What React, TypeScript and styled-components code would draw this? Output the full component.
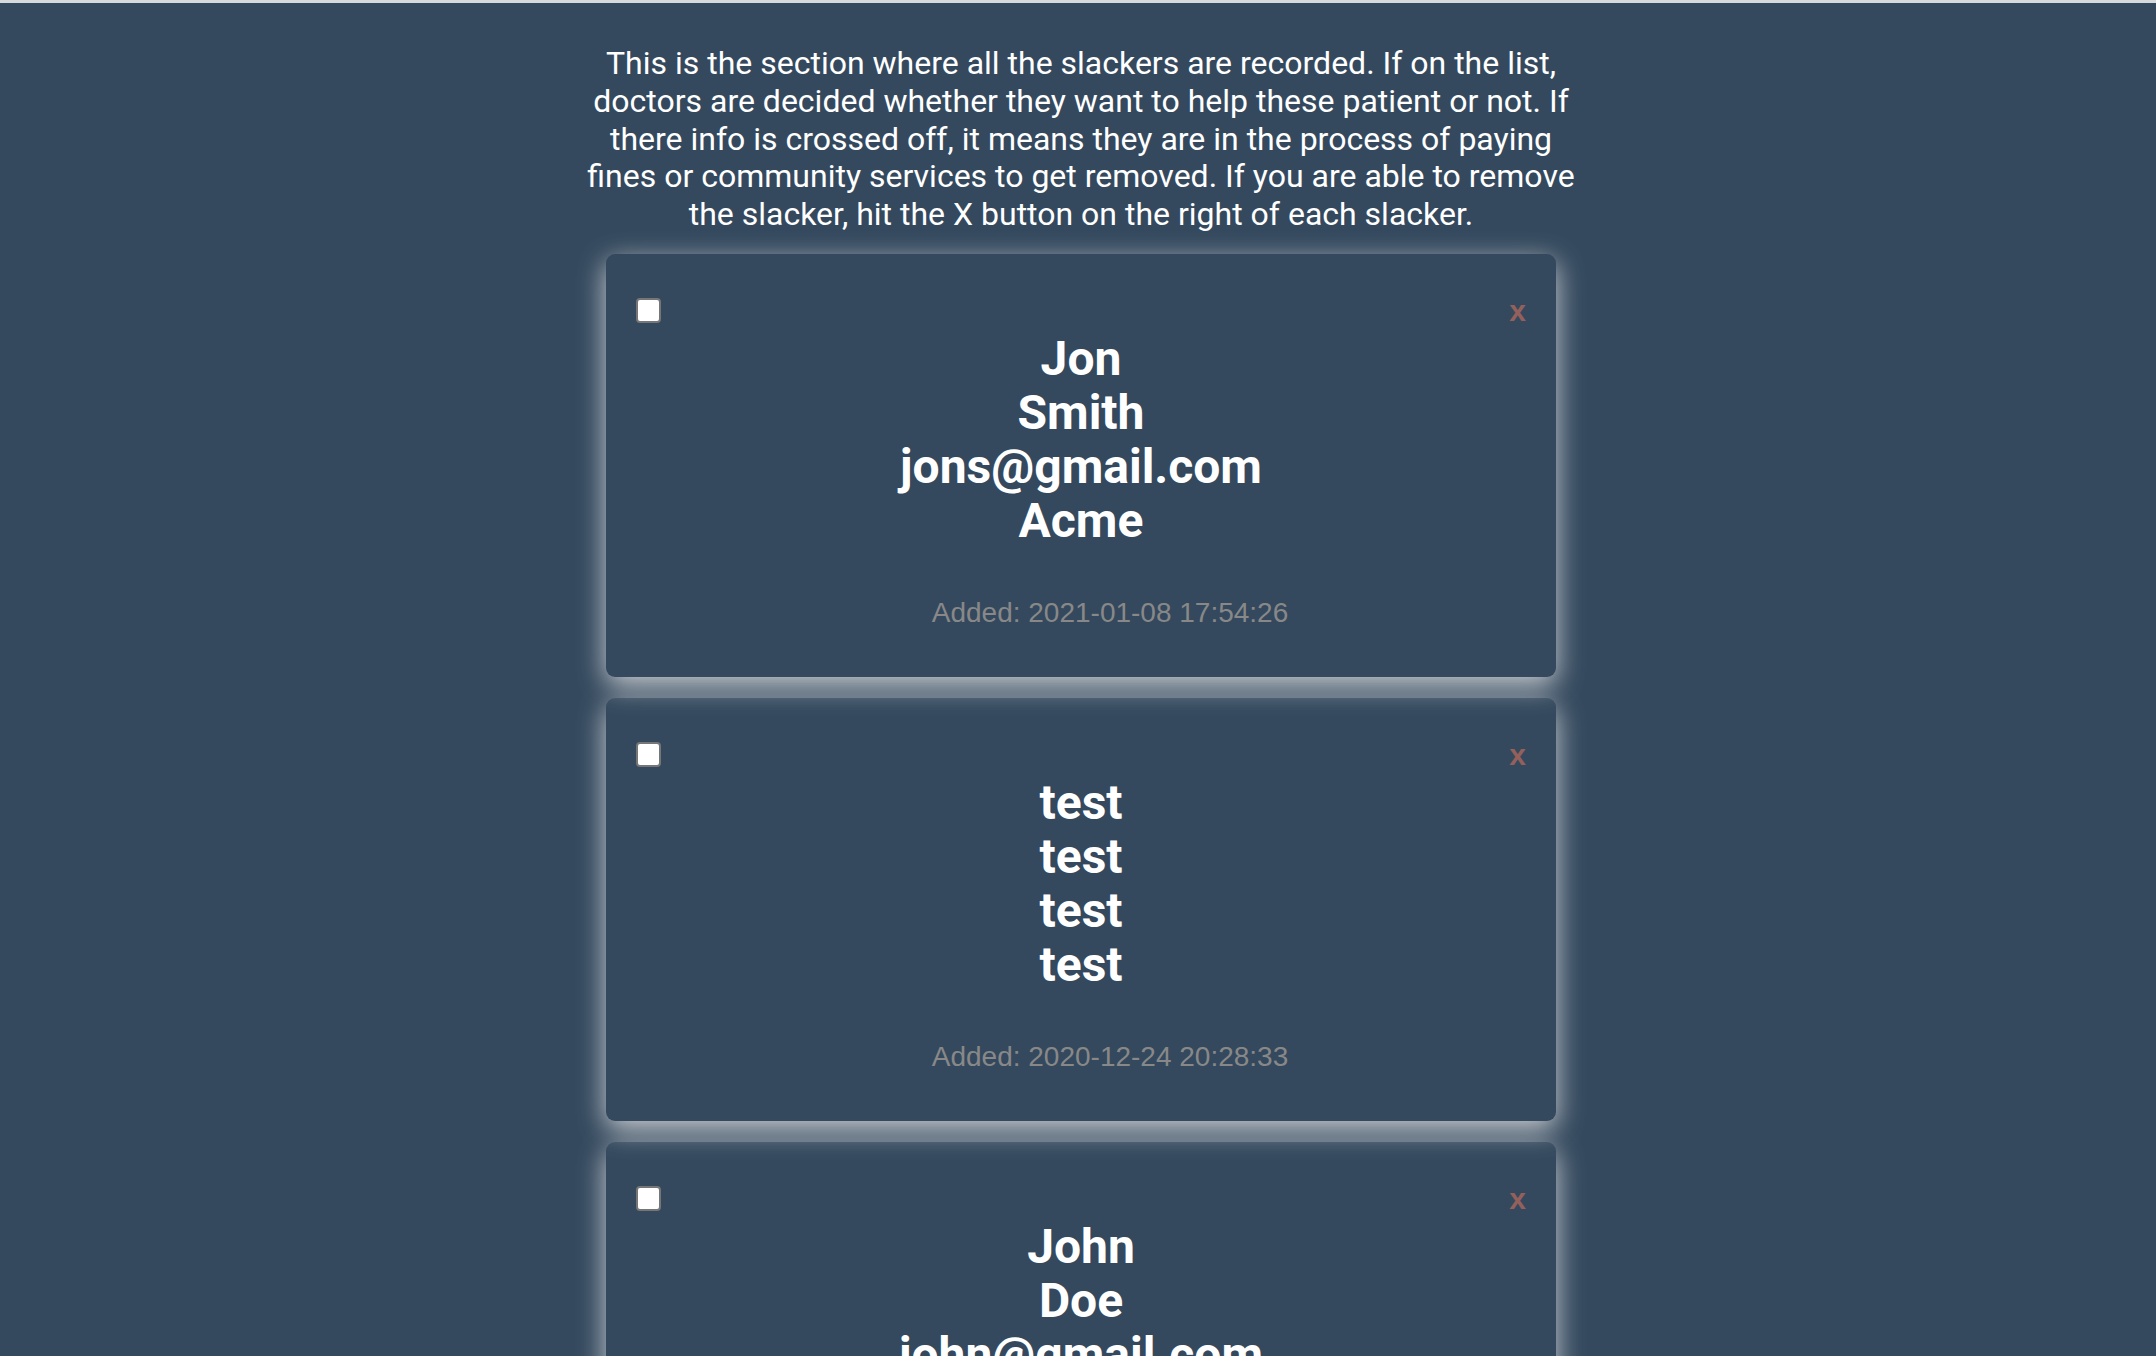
import React from 'react'
import styled, { createGlobalStyle } from 'styled-components'

const GlobalStyle = createGlobalStyle`
    html, body {
        margin: 0;
        padding: 0;
        background: #34495e;
    }
    body {
        font-family: Roboto, "Liberation Sans", sans-serif;
    }
`

type Slacker = {
    id: number
    first: string
    last: string
    email: string
    company: string
    added: string
}

const slackers: Slacker[] = [
    { id: 1, first: 'Jon', last: 'Smith', email: 'jons@gmail.com', company: 'Acme', added: '2021-01-08 17:54:26' },
    { id: 2, first: 'test', last: 'test', email: 'test', company: 'test', added: '2020-12-24 20:28:33' },
    { id: 3, first: 'John', last: 'Doe', email: 'john@gmail.com', company: 'Acme', added: '2020-12-20 11:02:15' },
]

const App: React.FC = () => {
    return (
        <>
            <GlobalStyle />
            <TopBar />
            <Page>
                <Intro>
                    This is the section where all the slackers are recorded. If on the list, doctors are decided
                    whether they want to help these patient or not. If there info is crossed off, it means they are
                    in the process of paying fines or community services to get removed. If you are able to remove
                    the slacker, hit the X button on the right of each slacker.
                </Intro>
                <List>
                    {slackers.map(s => (
                        <Card key={s.id}>
                            <CardTop>
                                <Check type="checkbox" />
                                <RemoveButton>x</RemoveButton>
                            </CardTop>
                            <Info>
                                <div>{s.first}</div>
                                <div>{s.last}</div>
                                <div>{s.email}</div>
                                <div>{s.company}</div>
                            </Info>
                            <Added>Added: {s.added}</Added>
                        </Card>
                    ))}
                </List>
            </Page>
        </>
    )
}

export default App

const TopBar = styled.div`
    height: 3px;
    background: #d6dadd;
`

const Page = styled.main`
    display: flex;
    flex-direction: column;
    align-items: center;
    padding: 42px 0 60px 6px;
`

const Intro = styled.p`
    margin: 0;
    width: 1000px;
    text-align: center;
    color: #fff;
    font-size: 32px;
    line-height: 37.8px;
`

const List = styled.div`
    display: flex;
    flex-direction: column;
    gap: 21px;
    margin-top: 20px;
    width: 950px;
`

const Card = styled.div`
    display: flex;
    flex-direction: column;
    height: 423px;
    box-sizing: border-box;
    padding: 44px 30px 48px 30px;
    border-radius: 9px;
    background: transparent;
    box-shadow: 0 8px 28px #cdd0d4;
`

const CardTop = styled.div`
    display: flex;
    justify-content: space-between;
    align-items: flex-start;
    height: 34px;
`

const Check = styled.input`
    appearance: none;
    margin: 0;
    width: 25px;
    height: 25px;
    box-sizing: border-box;
    border: 2px solid #767676;
    border-radius: 4px;
    background: #fff;
`

const RemoveButton = styled.span`
    font-family: "Liberation Sans", Arial, sans-serif;
    font-weight: 700;
    font-size: 30px;
    line-height: 26px;
    color: #94605c;
    cursor: pointer;
`

const Info = styled.div`
    text-align: center;
    color: #fff;
    font-weight: 700;
    font-size: 48px;
    line-height: 54px;
`

const Added = styled.div`
    margin-top: 49px;
    padding-left: 58px;
    text-align: center;
    font-family: "Liberation Sans", Arial, sans-serif;
    font-size: 28px;
    line-height: 32px;
    color: #888;
`
